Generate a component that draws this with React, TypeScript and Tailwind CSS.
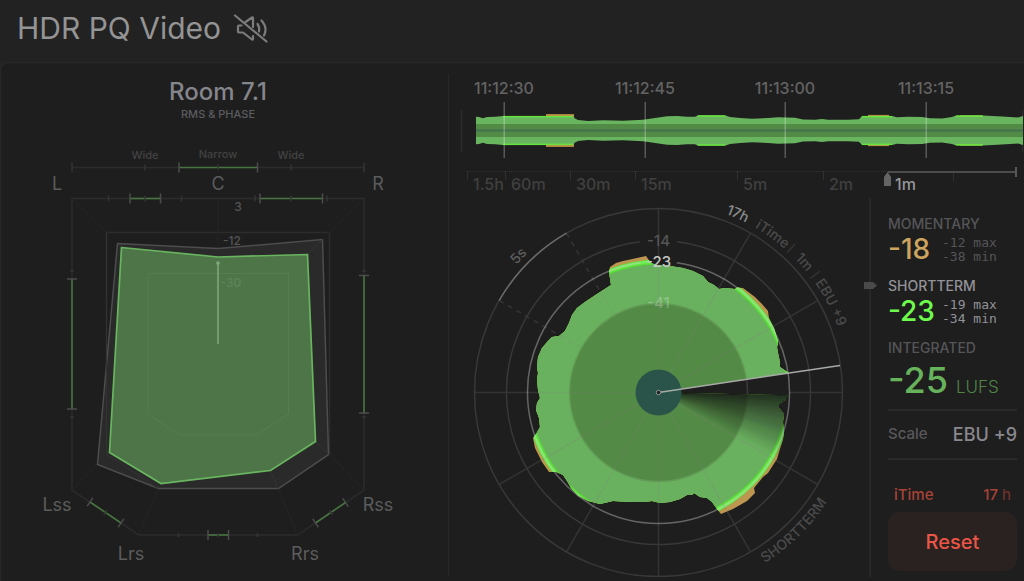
import type { ReactNode } from "react";

type Point = [number, number];

const CX = 658.5;
const CY = 392.5;

const polar = (r: number, deg: number): Point => {
    const a = (deg * Math.PI) / 180;
    return [CX + r * Math.cos(a), CY - r * Math.sin(a)];
};

const toPath = (points: Point[]) => "M" + points.map((p) => p.join(" ")).join("L") + "Z";

// clockwise arc, degrees measured counterclockwise from 3 o'clock
const arc = (r: number, from: number, to: number) => {
    const [x1, y1] = polar(r, from);
    const [x2, y2] = polar(r, to);
    return `M${x1} ${y1}A${r} ${r} 0 ${from - to > 180 ? 1 : 0} 1 ${x2} ${y2}`;
};

const RANGES = ["1.5h", "60m", "30m", "15m", "5m", "2m", "1m"];

const TIMES = [
    { x: 504, label: "11:12:30" },
    { x: 645, label: "11:12:45" },
    { x: 785, label: "11:13:00" },
    { x: 926, label: "11:13:15" },
];

const LEVELS: Point[] = [
    [476, 13.8], [479, 13.6], [483, 12.2], [487, 13.4], [495, 13.8], [503, 14.6], [573, 14.6], [575, 12], [578, 10.6],
    [588, 9.4], [603, 10.2], [623, 9.8], [643, 10.8], [650, 11.8], [667, 14.2], [677, 14.5], [687, 13.8], [695, 13.8],
    [698, 15.2], [725, 15.2], [730, 13.6], [740, 12.5], [752, 11.8], [768, 12.5], [778, 13.2], [795, 12.8], [803, 11],
    [815, 10.8], [822, 11.4], [828, 10.8], [848, 10.8], [859, 11.2], [862, 14.6], [892, 14.6], [897, 13.2], [908, 13.8],
    [922, 13.5], [930, 12.3], [942, 12], [952, 13.5], [956, 15], [983, 15], [1002, 14], [1018, 13], [1023, 14.5],
];

const HOT = [
    { from: 503, to: 573, h: 14.6 },
    { from: 698, to: 725, h: 15.2 },
    { from: 862, to: 892, h: 14.6 },
    { from: 956, to: 983, h: 15 },
];

const PEAKS = [
    { from: 546, to: 574, h: 16.4 },
    { from: 868, to: 889, h: 15.6 },
    { from: 960, to: 982, h: 15.4 },
];

const TRACE: Point[] = [
    [538, 390], [537, 380], [538, 373], [537, 367], [538, 357], [542, 348], [548, 341], [552, 337], [559, 336], [565, 331],
    [569, 323], [572, 315], [577, 308], [585, 302], [597, 294], [611, 285], [609, 272], [610, 267], [616, 263], [623, 261],
    [637, 258], [646, 256], [651, 263], [657, 265], [670, 266], [683, 268], [693, 271], [703, 276], [708, 282], [714, 285],
    [719, 289], [725, 288], [735, 289], [737, 287.5], [743, 288], [755, 297], [762, 304], [768, 311], [769, 318], [774, 328],
    [778, 341], [778, 344], [777, 347], [778, 353], [779.5, 360], [780, 367], [788.5, 372.8],
    [CX, CY],
    [787.5, 395.2], [785, 400], [779, 404], [779, 408], [784, 414], [783, 422], [784, 432], [783, 440], [780, 449],
    [777, 459], [768, 473], [763, 477], [754, 488], [755, 493], [747, 501], [733, 509], [721, 514], [717, 509], [712, 502],
    [707, 498], [700, 497], [694, 493], [692, 495], [687, 495], [680, 499], [670, 502], [660, 503], [656, 502], [652, 501],
    [645, 502], [630, 502], [613, 501], [600, 504], [588, 501], [578, 495.5], [571, 488], [567, 481], [563, 475], [556, 472],
    [549, 472], [542, 462], [535, 448], [533, 438], [536, 434], [540, 427], [539, 418], [536, 410], [537, 403], [540, 398],
];

// captions set along the outer ring
const RING_LABELS = [
    { text: "5s", offset: "24.6%", color: "#5e5e5e" },
    { text: "17h", offset: "63.3%", color: "#8c8c8c" },
    { text: "iTime", offset: "69.9%", color: "#4a4a4a" },
    { text: "1m", offset: "76.8%", color: "#4a4a4a" },
    { text: "EBU +9", offset: "84.7%", color: "#4a4a4a" },
];

const FADE_STEPS = 28;
const fadeLevel = (k: number) => 0.18 + 0.82 * Math.pow(k / FADE_STEPS, 0.9);

function Tick({ x, y, size = 2, angle = 0, color = "#343434" }: { x: number; y: number; size?: number; angle?: number; color?: string }) {
    return (
        <line x1={x} x2={x} y1={y - size} y2={y + size} stroke={color} strokeWidth="1.5" transform={`rotate(${angle} ${x} ${y})`} />
    );
}

function Gauge({ from, to, angle = 0 }: { from: Point; to: Point; angle?: number }) {
    return (
        <g>
            <line x1={from[0]} y1={from[1]} x2={to[0]} y2={to[1]} stroke="#46753f" strokeWidth="1.6" />
            <Tick x={from[0]} y={from[1]} size={5} angle={angle} color="#4c4c4c" />
            <Tick x={to[0]} y={to[1]} size={5} angle={angle} color="#4c4c4c" />
        </g>
    );
}

function RoomChart() {
    return (
        <svg viewBox="0 122 436 450" className="block w-full" role="img" aria-label="Room 7.1 levels">
            <g fill="none" stroke="#2c2c2c" strokeWidth="1.5">
                <path d="M72 167.5H364" />
                <path d="M72 198.5H364V490L297.5 535H139L72 490Z" />
                <path d="M106.5 232.5H329.5V454L278 488.5H158L106.5 454Z" />
            </g>
            <g fill="none" stroke="#252525">
                <path d="M72 198.5L106.5 232.5M364 198.5L329.5 232.5M72 490L106.5 454M364 490L329.5 454M139 535L158 488.5M297.5 535L278 488.5M218 198.5V257" />
            </g>

            <path d="M117.5 243.5L218 248.5L322.5 239.5L328.5 454.5L278.5 488.5H158.5L97.5 464.5Z" fill="#2a2a2a" stroke="#4d4d4d" strokeWidth="1.5" />
            <path d="M106.5 232.5V454L158 488.5M322.5 239.5L307.5 254.5M315.5 441.5L328.5 454M270.5 470.5L278 488.5" fill="none" stroke="#333333" />
            <path d="M121.5 247.5L218 257L307.5 254.5L315.5 441.5L270.5 470.5L161 483.5L109.5 452.5Z" fill="#4d7548" stroke="#69b55f" strokeWidth="1.7" />
            <path d="M148 273.5H288.5V414L256 435H180L148 414Z" fill="none" stroke="#557d50" />
            <path d="M218 263V344" stroke="#83a97e" strokeWidth="1.5" />
            <circle cx="218" cy="263" r="1.8" fill="#83a97e" />

            <Gauge from={[179, 167.5]} to={[257.5, 167.5]} />
            <Gauge from={[130, 198.5]} to={[160.5, 198.5]} />
            <Gauge from={[260, 198.5]} to={[322.5, 198.5]} />
            <Gauge from={[72, 279]} to={[72, 409]} angle={90} />
            <Gauge from={[364, 275.5]} to={[364, 413]} angle={90} />
            <Gauge from={[208, 535]} to={[228.5, 535]} />
            <Gauge from={[90, 502]} to={[121, 523]} angle={34} />
            <Gauge from={[345.5, 502.5]} to={[315.5, 523]} angle={-34} />

            <Tick x={72} y={167.5} size={5} />
            <Tick x={364} y={167.5} size={5} />
            {[145, 218, 291].map((x) => <Tick key={x} x={x} y={167.5} size={3} />)}
            {[108.5, 145, 181.5, 255, 291, 327].map((x) => <Tick key={x} x={x} y={198.5} size={3} />)}
            {[178.5, 218, 257.5].map((x) => <Tick key={x} x={x} y={535} />)}
            {[72, 364].map((x) => (
                <g key={x}>
                    <Tick x={x} y={271} angle={90} />
                    <Tick x={x} y={417} angle={90} />
                </g>
            ))}
            <Tick x={105.5} y={512.5} size={3} angle={34} />
            <Tick x={331} y={512.5} size={3} angle={-34} />

            <g fontSize="11" fill="#424242" textAnchor="middle">
                <text x="145" y="159">Wide</text>
                <text x="218" y="158">Narrow</text>
                <text x="291" y="159">Wide</text>
            </g>
            <g fontSize="12" fill="#555555" textAnchor="middle">
                <text x="238" y="211">3</text>
                <text x="232" y="245">-12</text>
                <text x="231" y="287" fill="#5f845a">-30</text>
            </g>
            <g fontSize="18" fontWeight="400" fill="#5c5c5c" textAnchor="middle">
                <text x="57" y="190">L</text>
                <text x="218" y="190">C</text>
                <text x="378" y="190">R</text>
                <text x="57" y="511">Lss</text>
                <text x="378" y="511">Rss</text>
                <text x="131" y="560">Lrs</text>
                <text x="305" y="560">Rrs</text>
            </g>
        </svg>
    );
}

function Timeline() {
    const mid = 130.5;
    const top = LEVELS.map(([x, h]) => [x, mid - h] as Point);
    const bottom = [...LEVELS].reverse().map(([x, h]) => [x, mid + h] as Point);

    return (
        <svg viewBox="449 74 575 92" className="block w-full" role="img" aria-label="Loudness history">
            <path d="M461.5 110V152M1022.5 110V152" stroke="#2c2c2c" strokeWidth="1.5" />
            {PEAKS.map((p) => (
                <rect key={p.from} x={p.from} y={mid - p.h} width={p.to - p.from} height={p.h * 2} fill="#bd9146" />
            ))}
            <path d={toPath([...top, ...bottom])} fill="#69b45f" />
            {HOT.map((p) => (
                <g key={p.from} fill="#67e23f">
                    <rect x={p.from} y={mid - p.h} width={p.to - p.from} height="1.5" />
                    <rect x={p.from} y={mid + p.h - 1.5} width={p.to - p.from} height="1.5" />
                </g>
            ))}
            <rect x="476" y="124" width="547" height="13" fill="#528b46" />
            <rect x="476" y="129.5" width="547" height="2" fill="#427150" />
            {TIMES.map((t) => (
                <g key={t.label}>
                    <rect x={t.x - 0.5} y="102" width="1.5" height="56" fill="#ffffff" fillOpacity="0.26" />
                    <text x={t.x} y="94" fontSize="16" fill="#636363" textAnchor="middle">{t.label}</text>
                </g>
            ))}
        </svg>
    );
}

function RangeScale() {
    return (
        <div className="grid grid-cols-[38fr_65fr_65fr_102fr_86fr_65fr_129fr] pt-[5px] pl-[18px] pr-[7px]">
            {RANGES.map((range) => {
                const active = range === "1m";
                return (
                    <button
                        key={range}
                        type="button"
                        aria-pressed={active}
                        className={
                            active
                                ? "relative flex h-[27px] items-start border-t-2 border-[#4c4c4c] pt-px pl-[7px] text-base leading-5 text-[#96969c]"
                                : "relative flex h-[27px] items-start border-t border-dotted border-[#333333] pt-[2px] pl-[6px] text-base leading-5 text-[#404040]"
                        }
                    >
                        {range}
                        {!active && <span className="absolute top-0 left-0 h-2 w-px bg-[#303030]" />}
                        {active && (
                            <>
                                <svg viewBox="0 0 7 14" className="absolute -top-px -left-1 h-[14px] w-[7px]" aria-hidden="true">
                                    <path d="M3.5 0L7 5V14H0V5Z" fill="#646464" />
                                </svg>
                                <span className="absolute top-0 left-1/2 h-2 w-px bg-[#303030]" />
                                <span className="absolute -top-[6px] right-0 h-[10px] w-[2px] bg-[#575757]" />
                            </>
                        )}
                    </button>
                );
            })}
        </div>
    );
}

function Radar() {
    const spokes = [30, 60, 90, 180, 210, 240, 270, 300, 330];

    return (
        <svg viewBox="449 198 420 379" className="block min-w-0 flex-1" role="img" aria-label="Loudness radar">
            <defs>
                <clipPath id="trace">
                    <path d={toPath(TRACE)} />
                </clipPath>
                <path id="outerTop" d={arc(191, 180, 0)} />
                <path id="outerBottom" d={`M${CX - 201} ${CY}A201 201 0 0 0 ${CX + 201} ${CY}`} />
            </defs>

            <circle cx={CX} cy={CY} r="89" fill="none" stroke="#3a3a3a" strokeWidth="1.5" />
            <g clipPath="url(#trace)">
                <rect x="510" y="240" width="300" height="300" fill="#bd9650" />
                <circle cx={CX} cy={CY} r="133" fill="#58dd38" />
                <circle cx={CX} cy={CY} r="131" fill="none" stroke="#72ee55" strokeWidth="3" />
                <circle cx={CX} cy={CY} r="128" fill="#6ab15f" />
                <circle cx={CX} cy={CY} r="89" fill="#538a45" stroke="#629c56" strokeWidth="1.5" />
                {Array.from({ length: FADE_STEPS }, (_, k) => {
                    const [x1, y1] = polar(145, 3);
                    const [x2, y2] = polar(145, -(k + 2));
                    return (
                        <path
                            key={k}
                            d={`M${CX} ${CY}L${x1} ${y1}A145 145 0 0 1 ${x2} ${y2}Z`}
                            fill="#1e1e1e"
                            fillOpacity={1 - fadeLevel(k) / fadeLevel(k + 1)}
                        />
                    );
                })}
            </g>
            <circle cx={CX} cy={CY} r="23" fill="#2a5449" />

            <g stroke="#808080" strokeOpacity="0.22" strokeWidth="1.5">
                {spokes.map((deg) => {
                    const [x1, y1] = polar(23, deg);
                    const [x2, y2] = polar(184, deg);
                    return <line key={deg} x1={x1} y1={y1} x2={x2} y2={y2} />;
                })}
                <path d="M789 392.5H842.5" />
                {[120, 150].map((deg) => {
                    const [x1, y1] = polar(184, deg);
                    const [x2, y2] = polar(90, deg);
                    return <line key={deg} x1={x1} y1={y1} x2={x2} y2={y2} strokeDasharray="5 5" />;
                })}
                {[47.4, 36.9].map((deg) => {
                    const [x1, y1] = polar(190, deg);
                    const [x2, y2] = polar(202, deg);
                    return <line key={deg} x1={x1} y1={y1} x2={x2} y2={y2} />;
                })}
            </g>

            <g fill="none" strokeWidth="1.5">
                <circle cx={CX} cy={CY} r="184" stroke="#383838" />
                <path d={arc(184, 150, 120)} stroke="#6a6a6a" />
                <path d={arc(152, 83, -263)} stroke="#383838" />
                <path d={arc(131, 82, -262)} stroke="#c8c8c8" strokeOpacity="0.42" />
            </g>

            <line x1={CX} y1={CY} x2="840" y2="365.5" stroke="#a5aaa5" strokeWidth="1.5" />
            <circle cx={CX} cy={CY} r="2.2" fill="#1e1e1e" stroke="#8f9c98" />

            <g fontSize="15" textAnchor="middle">
                <text x={CX} y="246" fill="#555555">-14</text>
                <text x={CX} y="267" fill="#c4c8c4">-23</text>
                <text x={CX} y="308" fill="#ffffff" fillOpacity="0.25">-41</text>
            </g>

            {RING_LABELS.map((label) => (
                <text key={label.text} fontSize="14" fill={label.color} textAnchor="middle">
                    <textPath href="#outerTop" startOffset={label.offset}>{label.text}</textPath>
                </text>
            ))}
            <text fontSize="14" fill="#4a4a4a" textAnchor="middle">
                <textPath href="#outerBottom" startOffset="74.7%">SHORTTERM</textPath>
            </text>
        </svg>
    );
}

function Reading({ title, value, children }: { title: ReactNode; value: ReactNode; children: ReactNode }) {
    return (
        <div className="flex flex-col gap-[2px]">
            {title}
            <div className="flex h-7 items-center gap-2">
                <div className="w-[46px]">{value}</div>
                <div className="font-['DejaVu_Sans_Mono',monospace] text-[13px] leading-[14px] font-normal whitespace-pre">{children}</div>
            </div>
        </div>
    );
}

function Sidebar() {
    return (
        <aside className="relative flex w-[155px] shrink-0 flex-col self-stretch border-l-2 border-[#272727] pt-4 pr-[7px] pl-[17px]">
            <svg viewBox="0 0 13 7" className="absolute top-[84px] -left-[7px] h-[7px] w-[13px]" aria-hidden="true">
                <path d="M0 0H9L13 3.5L9 7H0Z" fill="#4a4a4a" />
            </svg>

            <div className="flex flex-col gap-3">
                <div className="text-[#555558]">
                    <Reading
                        title={<h2 className="text-sm leading-5">MOMENTARY</h2>}
                        value={<span className="text-[28px] leading-7 text-[#cda45e]">-18</span>}
                    >
                        {"-12 max\n-38 min"}
                    </Reading>
                </div>
                <div className="text-[#929298]">
                    <Reading
                        title={<h2 className="text-sm leading-5">SHORTTERM</h2>}
                        value={<span className="text-[28px] leading-7 text-[#6dfb4c]">-23</span>}
                    >
                        {"-19 max\n-34 min"}
                    </Reading>
                </div>
                <div className="flex flex-col gap-[2px]">
                    <h2 className="text-sm leading-5 text-[#555558]">INTEGRATED</h2>
                    <div className="flex items-baseline gap-2 leading-10">
                        <span className="text-4xl leading-10 text-[#67b35c]">-25</span>
                        <span className="text-[17px] leading-6 font-light text-[#4f8446]">LUFS</span>
                    </div>
                </div>
            </div>

            <div className="mt-[9px] flex h-[51px] items-center justify-between border-y-2 border-[#2a2a2a]">
                <span className="text-[15px] text-[#58585b]">Scale</span>
                <button type="button" className="text-lg whitespace-nowrap text-[#88888e]">EBU +9</button>
            </div>

            <div className="mt-[25px] flex justify-between px-[6px] text-[15px] leading-5 text-[#a84237]">
                <span>iTime</span>
                <span>
                    17 <span className="text-[#6d322c]">h</span>
                </span>
            </div>
            <button type="button" className="mt-[7px] h-[59px] rounded-xl bg-[#2a2220] text-xl text-[#ea5545]">
                Reset
            </button>
        </aside>
    );
}

export default function App() {
    return (
        <div className="flex min-h-screen flex-col bg-[#222222] font-['Inter',sans-serif] font-medium">
            <header className="flex h-[62px] items-center gap-3 px-[17px] pb-[6px]">
                <h1 className="text-3xl leading-10 font-normal text-[#949494]">HDR PQ Video</h1>
                <button type="button" aria-label="Unmute">
                    <svg viewBox="236 13 36 30" className="h-[30px] w-9" fill="none" stroke="#7c7c7c" strokeWidth="2.2" strokeLinecap="round" strokeLinejoin="round">
                        <path d="M238 15.5L269.5 41.5" />
                        <path d="M244.5 25.5H242Q241 25.5 241 26.5V31.5Q241 32.5 242 32.5H246L255 39.5Q256 40 256 39V36" />
                        <path d="M248.5 22L255 17.5Q256 17 256 18V27" />
                        <path d="M260.5 24Q263 27.5 262 31.5" />
                        <path d="M264.5 20.5Q271 28 267 35.5" />
                    </svg>
                </button>
            </header>

            <main className="grid flex-1 grid-cols-[7fr_9fr] rounded-tl-md bg-[#1e1e1e] shadow-[inset_1px_1px_2px_#2c2c2c]">
                <section className="pt-4 pr-3">
                    <h2 className="text-center text-2xl leading-7 text-[#85858c]">Room 7.1</h2>
                    <p className="text-center text-[11px] leading-4 text-[#5c5c60]">RMS &amp; PHASE</p>
                    <RoomChart />
                </section>

                <section className="mt-3 mb-1 flex flex-col border-l border-[#282828]">
                    <Timeline />
                    <RangeScale />
                    <div className="flex flex-1 items-start">
                        <Radar />
                        <Sidebar />
                    </div>
                </section>
            </main>
        </div>
    );
}
